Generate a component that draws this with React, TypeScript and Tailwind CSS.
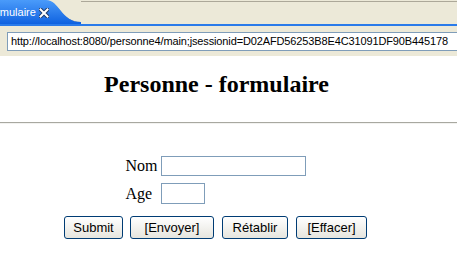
import React from "react";

export default function App() {
  const sans = { fontFamily: '"Liberation Sans", Arial, sans-serif' } as const;
  const serif = { fontFamily: '"Liberation Serif", "Times New Roman", serif' } as const;
  const btn =
    "h-[23px] border border-[#003C74] rounded-[3px] bg-gradient-to-b from-white to-[#E6E5DE] text-[13px] text-black leading-[15px]";
  return (
    <div className="w-[457px] h-[256px] overflow-hidden bg-white flex flex-col">
      {/* tab bar */}
      <div className="flex h-[24px] bg-[#ECE9D8] shrink-0">
        <div
          className="w-[45px] h-[24px] bg-gradient-to-b from-[#4A9BFA] to-[#0F62E0] flex items-start relative z-10"
          style={sans}
        >
          <span className="text-white text-[11px] leading-[13px] mt-[6px] ml-[-13px] whitespace-nowrap">
            formulaire
          </span>
          <svg className="absolute left-[39px] top-[8px]" width="10" height="10" viewBox="0 0 10 10">
            <path d="M1.5 1.5 L8.5 8.5 M8.5 1.5 L1.5 8.5" stroke="#1d3a6a" strokeWidth="4" strokeLinecap="square" />
            <path d="M1.5 1.5 L8.5 8.5 M8.5 1.5 L1.5 8.5" stroke="#ffffff" strokeWidth="2" strokeLinecap="square" />
          </svg>
        </div>
        <svg width="36" height="24" viewBox="0 0 36 24" className="shrink-0">
          <defs>
            <linearGradient id="tg" x1="0" y1="0" x2="0" y2="1">
              <stop offset="0" stopColor="#4A9BFA" />
              <stop offset="1" stopColor="#0F62E0" />
            </linearGradient>
          </defs>
          <rect x="0" y="0" width="36" height="24" fill="#ECE9D8" />
          <path d="M0 1.5 H1 C8 1.5 11 6 16 12 C21 18 26 22 36 22.5" fill="none" stroke="#ACA899" strokeWidth="1" />
          <path d="M0 0 H1 C8 0 11 5 16 11 C21 17 26 22 36 22 V24 H0 Z" fill="url(#tg)" />
        </svg>
        <div className="flex-1 flex flex-col">
          <div className="h-[1px] bg-[#ECE9D8]" />
          <div className="h-[1px] bg-[#ACA899]" />
        </div>
      </div>
      <div className="h-[2px] bg-[#2A7BEA] shrink-0" />
      {/* address bar */}
      <div className="bg-[#ECE9D8] pt-[6px] pb-[5px] pl-[7px] shrink-0">
        <div
          className="h-[19px] bg-white border border-[#7F9DB9] border-r-0 pl-[3px] flex items-center whitespace-nowrap overflow-hidden text-[11px] tracking-[-0.13px] text-black"
          style={sans}
        >
          http://localhost:8080/personne4/main;jsessionid=D02AFD56253B8E4C31091DF90B445178
        </div>
      </div>
      {/* page */}
      <div className="flex flex-col">
        <div className="w-[433px] mt-[14px]">
          <h1 className="text-[24px] leading-[28px] font-bold text-center text-black" style={serif}>
            Personne - formulaire
          </h1>
        </div>
        <div className="mt-[24px] h-[2px] border-t border-[#A8A8A0] bg-[#F2F2F0]" />
        <div className="w-[431px] mt-[32px] flex flex-col items-center">
          <div className="w-[180px] flex flex-col gap-[7px]">
            <div className="flex items-center">
              <span className="w-[35px] text-[16px] leading-[16px] text-black" style={serif}>
                Nom
              </span>
              <input className="w-[145px] h-[20px] border border-[#7F9DB9] bg-white outline-none" />
            </div>
            <div className="flex items-center">
              <span className="w-[35px] text-[16px] leading-[16px] text-black" style={serif}>
                Age
              </span>
              <input className="w-[44px] h-[21px] border border-[#7F9DB9] bg-white outline-none" />
            </div>
          </div>
          <div className="flex mt-[12px]" style={sans}>
            <button className={`w-[59px] ${btn}`}>Submit</button>
            <button className={`ml-[7px] w-[84px] ${btn}`}>[Envoyer]</button>
            <button className={`ml-[8px] w-[66px] ${btn}`}>Rétablir</button>
            <button className={`ml-[8px] w-[71px] ${btn}`}>[Effacer]</button>
          </div>
        </div>
      </div>
    </div>
  );
}
